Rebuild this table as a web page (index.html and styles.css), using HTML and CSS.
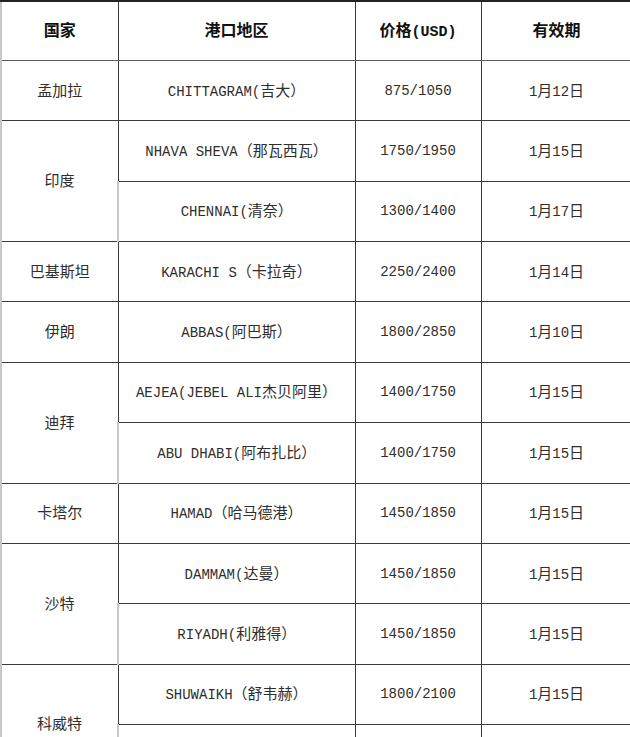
FILE: index.html
```html
<!DOCTYPE html>
<html lang="zh">
<head>
<meta charset="utf-8">
<title>运价表</title>
<link rel="stylesheet" href="styles.css">
</head>
<body>
<table class="rates">
  <colgroup>
    <col class="c-country">
    <col class="c-port">
    <col class="c-price">
    <col class="c-date">
  </colgroup>
  <thead>
    <tr>
      <th><span class="zh">国家</span></th>
      <th><span class="zh">港口地区</span></th>
      <th><span class="zh">价格</span>(USD)</th>
      <th><span class="zh">有效期</span></th>
    </tr>
  </thead>
  <tbody>
    <tr>
      <td><span class="zh">孟加拉</span></td>
      <td>CHITTAGRAM(<span class="zh">吉大）</span></td>
      <td>875/1050</td>
      <td>1<span class="zh">月</span>12<span class="zh">日</span></td>
    </tr>
    <tr>
      <td rowspan="2"><span class="zh">印度</span></td>
      <td>NHAVA SHEVA<span class="zh">（那瓦西瓦）</span></td>
      <td>1750/1950</td>
      <td>1<span class="zh">月</span>15<span class="zh">日</span></td>
    </tr>
    <tr>
      <td>CHENNAI(<span class="zh">清奈）</span></td>
      <td>1300/1400</td>
      <td>1<span class="zh">月</span>17<span class="zh">日</span></td>
    </tr>
    <tr>
      <td><span class="zh">巴基斯坦</span></td>
      <td>KARACHI S<span class="zh">（卡拉奇）</span></td>
      <td>2250/2400</td>
      <td>1<span class="zh">月</span>14<span class="zh">日</span></td>
    </tr>
    <tr>
      <td><span class="zh">伊朗</span></td>
      <td>ABBAS(<span class="zh">阿巴斯）</span></td>
      <td>1800/2850</td>
      <td>1<span class="zh">月</span>10<span class="zh">日</span></td>
    </tr>
    <tr>
      <td rowspan="2"><span class="zh">迪拜</span></td>
      <td>AEJEA(JEBEL ALI<span class="zh">杰贝阿里）</span></td>
      <td>1400/1750</td>
      <td>1<span class="zh">月</span>15<span class="zh">日</span></td>
    </tr>
    <tr>
      <td>ABU DHABI(<span class="zh">阿布扎比）</span></td>
      <td>1400/1750</td>
      <td>1<span class="zh">月</span>15<span class="zh">日</span></td>
    </tr>
    <tr>
      <td><span class="zh">卡塔尔</span></td>
      <td>HAMAD<span class="zh">（哈马德港）</span></td>
      <td>1450/1850</td>
      <td>1<span class="zh">月</span>15<span class="zh">日</span></td>
    </tr>
    <tr>
      <td rowspan="2"><span class="zh">沙特</span></td>
      <td>DAMMAM(<span class="zh">达曼）</span></td>
      <td>1450/1850</td>
      <td>1<span class="zh">月</span>15<span class="zh">日</span></td>
    </tr>
    <tr>
      <td>RIYADH(<span class="zh">利雅得）</span></td>
      <td>1450/1850</td>
      <td>1<span class="zh">月</span>15<span class="zh">日</span></td>
    </tr>
    <tr>
      <td rowspan="2"><span class="zh">科威特</span></td>
      <td>SHUWAIKH<span class="zh">（舒韦赫）</span></td>
      <td>1800/2100</td>
      <td>1<span class="zh">月</span>15<span class="zh">日</span></td>
    </tr>
    <tr>
      <td>SHUAIBA<span class="zh">（舒艾巴）</span></td>
      <td>1800/2100</td>
      <td>1<span class="zh">月</span>15<span class="zh">日</span></td>
    </tr>
  </tbody>
</table>
</body>
</html>
```

FILE: styles.css
```css
html, body {
  margin: 0;
  padding: 0;
  background: #ffffff;
}

body {
  width: 630px;
  height: 737px;
  overflow: hidden;
}

.rates {
  border-collapse: collapse;
  table-layout: fixed;
  width: 631px;
  font-family: "Liberation Mono", "Noto Sans CJK SC", monospace;
  font-size: 14px;
  color: #2e2e2e;
}

.c-country { width: 117px; }
.c-port { width: 237px; }
.c-price { width: 126px; }
.c-date { width: 151px; }

.rates th,
.rates td {
  height: 59.36px;
  padding: 0;
  text-align: center;
  vertical-align: middle;
  border: 1px solid #3a3a3a;
  white-space: nowrap;
  line-height: 20px;
}

.rates th {
  color: #111111;
  font-weight: bold;
  font-size: 15px;
  border-top: 2px solid #222222;
  border-bottom-color: #5a5a5a;
  height: 58px;
}

.rates th .zh {
  font-size: 16px;
}

.rates tr > :first-child {
  border-left: 2px solid #c8c8c8;
}

.zh {
  font-family: "Noto Sans CJK SC", sans-serif;
  font-size: 15px;
}
```
